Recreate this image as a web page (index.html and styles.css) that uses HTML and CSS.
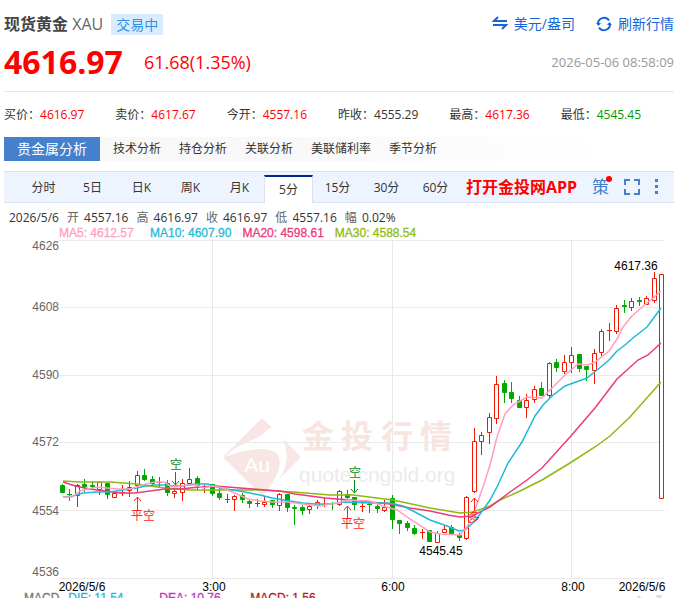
FILE: index.html
```html
<!DOCTYPE html>
<html lang="zh-CN">
<head>
    <meta charset="UTF-8">
    <meta name="viewport" content="width=device-width, initial-scale=1.0">
    <title>现货黄金 XAU</title>
    <link rel="stylesheet" href="styles.css">
</head>
<body>
    <header class="header">
        <div class="title-row">
            <h1 class="title">现货黄金 <span class="code">XAU</span></h1>
            <span class="status">交易中</span>
            <div class="actions">
                <button type="button" class="action">
                    <svg width="16" height="16" viewBox="0 0 16 16" fill="none" stroke="currentColor" stroke-width="2">
                        <path d="M15 5H2L6 1M1 9H14L10 13"/>
                    </svg>
                    美元/盎司
                </button>
                <button type="button" class="action">
                    <svg width="16" height="16" viewBox="0 0 16 16" fill="none" stroke="currentColor" stroke-width="2">
                        <path d="M2 8A6 6 0 0 1 13 4.500M14 8A6 6 0 0 1 3 11.500"/>
                        <path d="M0 7h5L2.500 10zM11 9h5L13.500 6z" fill="currentColor" stroke="none"/>
                    </svg>
                    刷新行情
                </button>
            </div>
        </div>
        <div class="price-row">
            <strong class="price">4616.97</strong>
            <span class="change">61.68(1.35%)</span>
            <time class="time">2026-05-06 08:58:09</time>
        </div>
    </header>

    <dl class="quotes">
        <div><dt>买价：</dt><dd class="up">4616.97</dd></div>
        <div><dt>卖价：</dt><dd class="up">4617.67</dd></div>
        <div><dt>今开：</dt><dd class="up">4557.16</dd></div>
        <div><dt>昨收：</dt><dd>4555.29</dd></div>
        <div><dt>最高：</dt><dd class="up">4617.36</dd></div>
        <div><dt>最低：</dt><dd class="down">4545.45</dd></div>
    </dl>

    <nav class="analysis">
        <a href="#" class="main">贵金属分析</a>
        <a href="#">技术分析</a>
        <a href="#">持仓分析</a>
        <a href="#">关联分析</a>
        <a href="#">美联储利率</a>
        <a href="#">季节分析</a>
    </nav>

    <div class="toolbar">
        <div class="periods">
            <button type="button">分时</button>
            <button type="button">5日</button>
            <button type="button">日K</button>
            <button type="button">周K</button>
            <button type="button">月K</button>
            <button type="button" class="active">5分</button>
            <button type="button">15分</button>
            <button type="button">30分</button>
            <button type="button">60分</button>
        </div>
        <a href="#" class="app-link">打开金投网APP</a>
        <div class="tools">
            <button type="button" class="strategy">策<i class="dot"></i></button>
            <button type="button" aria-label="全屏">
                <svg width="16" height="16" viewBox="0 0 16 16" fill="none" stroke="currentColor" stroke-width="2">
                    <path d="M1 6V1H6M10 1H15V6M15 10V15H10M6 15H1V10"/>
                </svg>
            </button>
            <button type="button" aria-label="更多">
                <svg width="4" height="16" viewBox="0 0 4 16" fill="currentColor">
                    <path d="M0 0h3v3H0zM0 6h3v3H0zM0 12h3v3H0z"/>
                </svg>
            </button>
        </div>
    </div>

    <div class="ohlc">
        <span>2026/5/6</span>
        <span><em>开</em> 4557.16</span>
        <span><em>高</em> 4616.97</span>
        <span><em>收</em> 4616.97</span>
        <span><em>低</em> 4557.16</span>
        <span><em>幅</em> 0.02%</span>
    </div>
    <div class="legend">
        <span class="ma5">MA5: 4612.57</span>
        <span class="ma10">MA10: 4607.90</span>
        <span class="ma20">MA20: 4598.61</span>
        <span class="ma30">MA30: 4588.54</span>
    </div>

    <svg class="chart" id="chart" viewBox="0 240 676 352">
        <g class="watermark">
            <path class="logo" d="M262 420L299 457L262 494L225 457Z"/>
            <path class="swoosh" d="M225 457C236 444 252 442 263 434C267 429 272 425 277 431C291 446 292 473 267 490C276 479 283 465 278 455C271 445 244 449 225 457Z"/>
            <text class="au" x="257" y="472">Au</text>
            <text class="brand" x="302 341 381 420" y="448">金投行情</text>
            <text class="site" x="299" y="482">quote.cngold.org</text>
        </g>
        <path class="grid" d="M59 240.500H664M59 307.500H664M59 375.500H664M59 442.500H664M59 510.500H664M59 578.500H664M212.500 240V578M392.500 240V578M571.500 240V578"/>
        <g id="candles"></g>
        <g id="averages"></g>
        <g class="y-axis">
            <text x="59" y="250">4626</text>
            <text x="59" y="311">4608</text>
            <text x="59" y="379">4590</text>
            <text x="59" y="446">4572</text>
            <text x="59" y="515">4554</text>
            <text x="59" y="576">4536</text>
        </g>
        <g class="x-axis">
            <text x="82" y="591">2026/5/6</text>
            <text x="214" y="591">3:00</text>
            <text x="393" y="591">6:00</text>
            <text x="573" y="591">8:00</text>
            <text x="642" y="591">2026/5/6</text>
            <text x="636" y="270">4617.36</text>
            <text x="441" y="555">4545.45</text>
        </g>
        <g class="signal sell">
            <text x="176" y="469">空</text>
            <path d="M175.500 472V485M172 481L175.500 485L179 481"/>
            <text x="355" y="477">空</text>
            <path d="M354.500 480V493M351 489L354.500 493L358 489"/>
        </g>
        <g class="signal close">
            <text x="143" y="520">平空</text>
            <path d="M137.500 510V497M134 501L137.500 497L141 501"/>
            <text x="353" y="528">平空</text>
            <path d="M347.500 519V506M344 510L347.500 506L351 510"/>
            <text x="474" y="522">多</text>
            <path d="M474.500 511V498M471 502L474.500 498L478 502"/>
        </g>
    </svg>

    <div class="legend macd">
        <span class="name">MACD</span>
        <span class="dif">DIF: 11.54</span>
        <span class="dea">DEA: 10.76</span>
        <span class="bar">MACD: 1.56</span>
        <svg class="arrows" width="30" height="8" viewBox="0 0 30 8">
            <path d="M5 3L9 8H1ZM21 3H29L25 8Z"/>
        </svg>
    </div>

    <script src="chart.js"></script>
</body>
</html>
```

FILE: styles.css
```css
* {
    box-sizing: border-box;
}

body {
    margin: 0;
    height: 100vh;
    overflow: hidden;
    background: #fff;
    color: #333;
    font: 12px/16px "Open Sans", "Noto Sans CJK SC", sans-serif;
}

a {
    color: inherit;
    text-decoration: none;
}

button {
    padding: 0;
    border: 0;
    background: none;
    color: inherit;
    font: inherit;
    cursor: pointer;
}

.header {
    margin: 0 2px 0 4px;
    padding: 12px 0 11px;
    border-bottom: 1px solid #e8e8e8;
}

.title-row,
.price-row {
    display: flex;
    align-items: center;
}

.title {
    margin: 0;
    font-size: 16px;
    line-height: 24px;
    color: #444;
}

.code {
    font-weight: 400;
    color: #666;
}

.status {
    margin-left: 8px;
    padding: 0 5px;
    background: #d9ecff;
    color: #2f8fe6;
    font-size: 14px;
    line-height: 21px;
}

.actions {
    display: flex;
    gap: 21px;
    margin-left: auto;
    color: #1664d9;
    font-size: 14px;
    line-height: 20px;
}

.action {
    display: flex;
    align-items: center;
    gap: 6px;
}

.price-row {
    height: 44px;
    padding-top: 8px;
}

.price {
    color: #f00;
    font-size: 32px;
    line-height: 36px;
}

.change {
    margin-left: 21px;
    color: #f00;
    font-size: 18px;
}

.time {
    margin-left: auto;
    color: #999;
    font-size: 13px;
}

.quotes {
    display: grid;
    grid-template-columns: repeat(6, 1fr);
    margin: 15px 4px 14px;
}

.quotes div {
    display: flex;
}

.quotes dd {
    margin: 0;
}

.up {
    color: #f00;
}

.down {
    color: #090;
}

.analysis {
    display: flex;
    align-items: center;
    gap: 18px;
    height: 24px;
    margin: 0 4px;
    background: linear-gradient(to right, #f8f8f8 40%, #fff 90%);
}

.analysis .main {
    margin-right: -5px;
    padding: 0 13px;
    background: #4580cc;
    color: #fff;
    font-size: 14px;
    line-height: 24px;
}

.toolbar {
    display: flex;
    align-items: center;
    height: 32px;
    margin: 10px 2px 0 4px;
    padding-left: 15px;
    border: solid #d9e2f2;
    border-width: 1px 0;
    background: #edf4fe;
}

.periods {
    display: flex;
    align-self: stretch;
}

.periods button {
    width: 49px;
    padding-top: 2px;
}

.periods .active {
    margin: 3px 0 -1px;
    padding: 0;
    border: 1px solid #d9e2f2;
    border-top: 2px solid #00288c;
    border-bottom: 0;
    background: #fff;
}

.app-link {
    margin-left: 6px;
    color: #f00;
    font-size: 16px;
    font-weight: 700;
}

.tools {
    display: flex;
    align-items: center;
    gap: 15px;
    margin-left: auto;
    padding-right: 15px;
    color: #4580cc;
}

.tools svg {
    display: block;
}

.strategy {
    position: relative;
    font-size: 17px;
}

.dot {
    position: absolute;
    top: -3px;
    right: -3px;
    width: 6px;
    height: 6px;
    border-radius: 50%;
    background: #f00;
}

.ohlc {
    display: flex;
    gap: 8px;
    padding: 7px 9px 0;
}

.ohlc em {
    margin-right: 2px;
    color: #666;
    font-style: normal;
}

.legend {
    display: flex;
    gap: 11px;
    padding-left: 59px;
    font: 12px/14px "Liberation Sans", Arial, sans-serif;
    -webkit-text-stroke: 0.3px currentColor;
}

.ma5 {
    min-width: 80px;
    color: #ff9fbf;
}

.ma10,
.dif {
    color: #1fbad6;
}

.ma20 {
    color: #ec3a7c;
}

.ma30 {
    color: #8fbb16;
}

.chart {
    display: block;
    width: 100%;
    font-family: "Liberation Sans", "Noto Sans CJK SC", sans-serif;
    font-size: 12px;
}

.grid {
    fill: none;
    stroke: #e9e9e9;
}

.logo {
    fill: #f7e6e3;
    stroke: #f7e6e3;
    stroke-width: 3;
    stroke-linejoin: round;
}

.swoosh {
    fill: #fff;
}

.watermark .au {
    fill: #fff;
    font-size: 21px;
    text-anchor: middle;
}

.watermark .brand {
    fill: #f8e5e0;
    font-size: 32px;
    font-weight: 700;
}

.watermark .site {
    fill: #ebebeb;
    font-size: 21px;
}

.y-axis {
    fill: #666;
    text-anchor: end;
}

.x-axis {
    fill: #000;
    text-anchor: middle;
}

.signal {
    text-anchor: middle;
}

.signal path {
    fill: none;
}

.sell text {
    fill: #0a8a1a;
}

.sell path {
    stroke: #0a8a1a;
}

.close text {
    fill: #f22;
}

.close path {
    stroke: #f22;
}

.candle-up {
    fill: #fff;
    stroke: #f01800;
}

.candle-down {
    fill: #00a800;
    stroke: #00a800;
}

.average {
    fill: none;
    stroke-width: 1.5;
}

.macd {
    gap: 9px;
    padding-left: 24px;
    line-height: 12px;
}

.macd .name {
    color: #777;
}

.macd .dif {
    width: 82px;
}

.macd .dea {
    width: 82px;
    color: #c433c4;
}

.macd .bar {
    color: #b81c1c;
}

.arrows {
    margin-left: auto;
    margin-right: 12px;
    fill: #ddd;
}
```

FILE: chart.js
```js
const NS = 'http://www.w3.org/2000/svg';
const START = 62.5;
const STEP = 7.49;

// [up, high, body top, body bottom, low]
const candles = [
    [0, 484, 485, 493, 493], [0, 489, 494, 494, 501], [1, 484, 485, 496, 507], [0, 479, 484, 487, 492],
    [0, 481, 485, 487, 489], [1, 482, 482, 490, 495], [0, 483, 483, 495, 499], [1, 491, 493, 498, 498],
    [1, 485, 492, 492, 496], [1, 481, 487, 491, 497], [1, 471, 475, 486, 493], [0, 469, 475, 480, 481],
    [0, 476, 479, 484, 487], [1, 477, 482, 482, 487], [0, 480, 483, 493, 496], [1, 489, 491, 494, 498],
    [1, 479, 483, 493, 501], [1, 468, 479, 484, 484], [0, 476, 478, 486, 490], [1, 485, 487, 487, 493],
    [0, 484, 484, 494, 496], [0, 488, 493, 498, 500], [1, 494, 499, 499, 503], [1, 495, 496, 500, 511],
    [0, 493, 495, 500, 503], [0, 499, 501, 504, 508], [1, 499, 503, 503, 507], [1, 496, 502, 505, 507],
    [0, 500, 500, 505, 508], [1, 493, 494, 506, 511], [0, 494, 494, 508, 512], [0, 505, 507, 509, 525],
    [0, 505, 507, 511, 515], [1, 503, 506, 510, 514], [1, 500, 502, 506, 509], [1, 498, 504, 504, 507],
    [0, 502, 503, 504, 510], [1, 490, 491, 505, 506], [0, 490, 494, 498, 499], [0, 497, 497, 505, 510],
    [1, 503, 506, 506, 512], [0, 502, 504, 505, 513], [0, 504, 506, 509, 513], [1, 500, 507, 511, 512],
    [0, 495, 498, 520, 529], [0, 520, 520, 524, 534], [0, 521, 523, 528, 531], [0, 525, 528, 534, 535],
    [1, 529, 532, 532, 539], [0, 530, 530, 542, 542], [1, 531, 533, 543, 543], [1, 525, 529, 533, 533],
    [0, 525, 527, 535, 535], [0, 533, 535, 538, 541], [1, 496, 497, 539, 540], [1, 428, 441, 492, 493],
    [1, 432, 435, 442, 455], [1, 413, 417, 433, 444], [1, 376, 384, 419, 424], [0, 380, 383, 393, 403],
    [0, 382, 392, 399, 403], [0, 396, 400, 408, 408], [1, 394, 400, 408, 418], [1, 386, 389, 400, 403],
    [0, 382, 388, 396, 396], [1, 362, 363, 396, 398], [0, 359, 362, 368, 372], [1, 355, 362, 372, 374],
    [1, 347, 355, 363, 373], [0, 354, 354, 369, 372], [0, 366, 366, 370, 381], [1, 349, 353, 371, 384],
    [1, 329, 331, 353, 356], [1, 323, 330, 330, 341], [1, 305, 308, 332, 334], [0, 300, 305, 307, 313],
    [1, 298, 301, 308, 311], [0, 297, 300, 302, 306], [1, 296, 298, 305, 305], [1, 272, 278, 301, 303],
    [1, 274, 274, 499, 499]
];

const averages = [
    ['#8fb810', '63,481 80,482 110,482 137,484 150,486 165,488 190,490 227,490 260,490 293,492 330,495 353,495 393,500 430,508 460,513 473,512 490,506 498,501 520,491 542,480 570,463 595,447 610,436 630,417 661,382'],
    ['#ec3a7c', '63,482 75,486 90,489 105,491 120,493 135,493 150,491 165,489 180,489 200,487 215,486 240,488 265,490 280,491 295,494 310,496 325,498 350,500 370,502 390,504 410,508 430,511 448,515 460,517 472,516 490,507 510,492 527,480 542,468 570,437 595,408 617,379 638,360 648,355 661,343'],
    ['#1fbad6', '63,497 73,496 83,493 97,492 110,492 123,490 137,488 145,486 155,485 165,485 175,486 183,486 195,484 208,484 220,488 245,492 260,495 272,498 290,501 303,503 315,504 330,504 345,502 370,503 390,503 403,506 413,511 430,520 447,526 459,531 465,530 475,521 483,510 490,500 497,487 508,463 522,442 535,416 543,405 552,396 565,386 587,378 602,366 609,360 617,351 625,345 633,338 647,327 661,308'],
    ['#ff9fbf', '63,497 72,497 80,491 88,489 97,487 107,488 118,489 130,489 139,486 146,484 155,482 165,482 170,486 176,487 187,485 197,485 203,488 213,486 223,488 237,494 248,499 260,501 273,502 288,502 303,504 320,506 337,503 347,500 370,501 383,506 397,510 410,519 430,532 440,534 460,535 467,527 473,515 483,487 490,465 497,437 505,414 513,405 527,397 542,398 565,375 578,364 588,365 595,362 609,351 617,339 623,327 632,316 640,309 653,298 661,291']
];

function add(parent, name, attrs) {
    const el = document.createElementNS(NS, name);
    for (const key in attrs) el.setAttribute(key, attrs[key]);
    parent.appendChild(el);
}

const candleGroup = document.getElementById('candles');
candles.forEach(([up, high, top, bottom, low], i) => {
    const x = Math.floor(START + i * STEP) + 0.5;
    const body = bottom - top < 2
        ? `M${x - 2.5} ${top + 0.5}h5`
        : `M${x - 2} ${top + 0.5}h4V${bottom - 0.5}h-4z`;
    add(candleGroup, 'path', {
        class: up ? 'candle-up' : 'candle-down',
        d: `M${x} ${high}V${top}M${x} ${bottom}V${low}${body}`
    });
});

const averageGroup = document.getElementById('averages');
averages.forEach(([stroke, points]) => {
    add(averageGroup, 'polyline', { class: 'average', stroke, points });
});
```
